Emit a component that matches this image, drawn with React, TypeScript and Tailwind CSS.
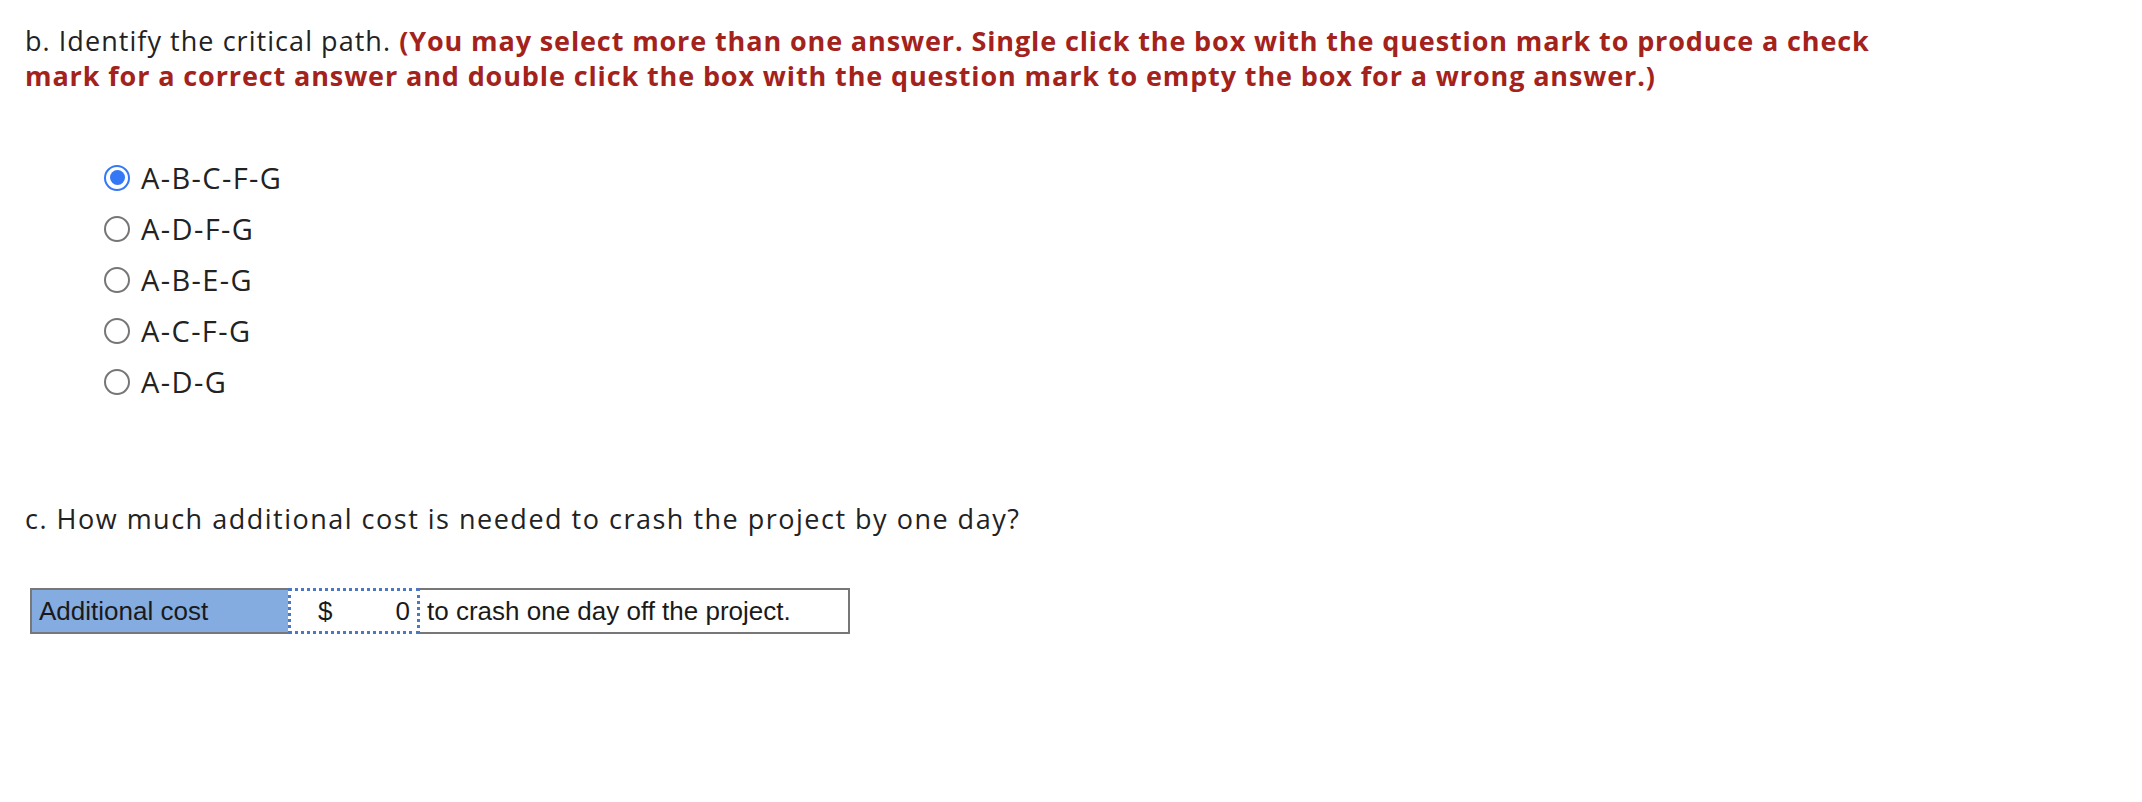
import React from "react";

const options = ["A-B-C-F-G", "A-D-F-G", "A-B-E-G", "A-C-F-G", "A-D-G"];

function Radio({ checked }: { checked: boolean }) {
  if (checked) {
    return (
      <span className="flex h-[26px] w-[26px] items-center justify-center rounded-full border-[2.5px] border-[#3478f6] bg-white">
        <span className="h-[15px] w-[15px] rounded-full bg-[#3478f6]" />
      </span>
    );
  }
  return <span className="h-[26px] w-[26px] rounded-full border-2 border-[#767676] bg-white" />;
}

export default function App() {
  return (
    <div className="min-h-[802px] w-[2142px] bg-white pl-[25px] pt-[23px] text-[#222222]" style={{ fontFamily: "'Open Sans', Lato, sans-serif" }}>
      <p className="text-[27px] leading-[35px] tracking-[1.05px]">
        b. Identify the critical path.{" "}
        <span className="font-bold tracking-[0.88px] text-[#a4221c]">
          (You may select more than one answer. Single click the box with the question mark to produce a check
          <br />
          mark for a correct answer and double click the box with the question mark to empty the box for a wrong answer.)
        </span>
      </p>

      <div className="mt-[59px] flex flex-col pl-[79px]">
        {options.map((o, i) => (
          <label key={o} className="flex h-[51px] items-center gap-[11px] text-[29px] tracking-[1.4px]">
            <Radio checked={i === 0} />
            <span>{o}</span>
          </label>
        ))}
      </div>

      <p className="mt-[94px] text-[27px] leading-[35px] tracking-[1.5px]">
        c. How much additional cost is needed to crash the project by one day?
      </p>

      <div
        className="ml-[5px] mt-[52px] flex h-[46px] w-[820px] text-[26px] text-[#1a1a1a]"
        style={{ fontFamily: "'Liberation Sans', Arial, sans-serif" }}
      >
        <div className="flex w-[258px] items-center border-y-2 border-l-2 border-[#777777] bg-[#84ace0] pl-[7px]">
          Additional cost
        </div>
        <div className="flex w-[132px] items-center justify-between border-[3px] border-dotted border-[#4a78c2] bg-white pl-[27px] pr-[7px]">
          <span>$</span>
          <span>0</span>
        </div>
        <div className="flex flex-1 items-center border-y-2 border-r-2 border-[#777777] bg-white pl-[7px]">
          to crash one day off the project.
        </div>
      </div>
    </div>
  );
}
